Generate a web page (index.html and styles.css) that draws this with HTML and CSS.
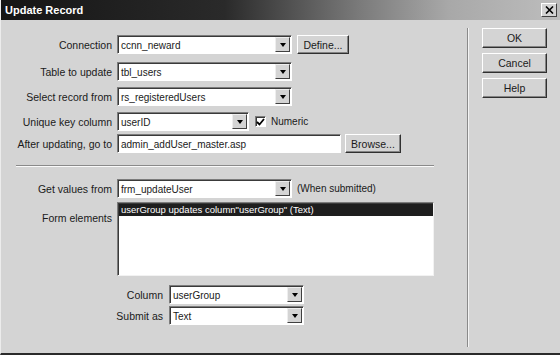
FILE: index.html
```html
<!DOCTYPE html>
<html lang="en">
<head>
  <meta charset="UTF-8">
  <title>Update Record</title>
  <link rel="stylesheet" href="styles.css">
</head>
<body>
  <div class="dialog">
    <div class="titlebar">
      <span class="title">Update Record</span>
      <span class="close">
        <svg width="9" height="8" viewBox="0 0 9 8"><path d="M1 0.5 L8 7.5 M8 0.5 L1 7.5" stroke="#000" stroke-width="1.6"/></svg>
      </span>
    </div>
    <div class="content">
      <div class="form">
        <div class="row">
          <label>Connection</label>
          <div class="select w175"><span>ccnn_neward</span><i class="arrow"></i></div>
          <button class="btn define">Define...</button>
        </div>
        <div class="row">
          <label>Table to update</label>
          <div class="select w175"><span>tbl_users</span><i class="arrow"></i></div>
        </div>
        <div class="row">
          <label>Select record from</label>
          <div class="select w175"><span>rs_registeredUsers</span><i class="arrow"></i></div>
        </div>
        <div class="row">
          <label>Unique key column</label>
          <div class="select w132"><span>userID</span><i class="arrow"></i></div>
          <span class="check">
            <svg width="9" height="8" viewBox="0 0 9 8"><path d="M1 4 L3.5 6.5 L8 1" fill="none" stroke="#000" stroke-width="1.8"/></svg>
          </span>
          <span class="text">Numeric</span>
        </div>
        <div class="row tight">
          <label>After updating, go to</label>
          <div class="input w224">admin_addUser_master.asp</div>
          <button class="btn browse">Browse...</button>
        </div>

        <div class="separator"></div>

        <div class="row">
          <label>Get values from</label>
          <div class="select w175"><span>frm_updateUser</span><i class="arrow"></i></div>
          <span class="text">(When submitted)</span>
        </div>
        <div class="row list-row">
          <label>Form elements</label>
          <div class="listbox">
            <div class="item selected">userGroup updates column"userGroup" (Text)</div>
          </div>
        </div>
        <div class="row sub first">
          <label>Column</label>
          <div class="select w135"><span>userGroup</span><i class="arrow"></i></div>
        </div>
        <div class="row sub">
          <label>Submit as</label>
          <div class="select w135"><span>Text</span><i class="arrow"></i></div>
        </div>
      </div>

      <div class="divider"></div>

      <div class="buttons">
        <button class="btn side default">OK</button>
        <button class="btn side">Cancel</button>
        <button class="btn side">Help</button>
      </div>
    </div>
  </div>
</body>
</html>
```

FILE: styles.css
```css
body {
  margin: 0;
  font-family: "Liberation Sans", Arial, sans-serif;
  font-size: 10px;
  color: #1a1a1a;
  background: #d4d4d4;
}
.dialog {
  width: 560px;
  height: 355px;
  box-sizing: border-box;
  background: #d4d4d4;
  border-left: 1px solid #ececec;
  border-bottom: 2px solid #2a2a2a;
  display: flex;
  flex-direction: column;
}
.titlebar {
  height: 20px;
  flex: none;
  display: flex;
  align-items: center;
  padding: 0 3px 0 4px;
  background: linear-gradient(to right, #151515 0%, #2a2a2a 40%, #7a7a7a 64%, #a8a8a8 80%, #bdbdbd 100%);
}
.title {
  color: #fff;
  font-weight: bold;
  font-size: 11px;
}
.close {
  margin-left: auto;
  width: 16px;
  height: 14px;
  box-sizing: border-box;
  background: #d4d4d4;
  border: 1px solid;
  border-color: #fff #404040 #404040 #fff;
  display: flex;
  align-items: center;
  justify-content: center;
}
.content {
  flex: 1;
  display: flex;
}
.form {
  width: 466px;
  padding-top: 15px;
  display: flex;
  flex-direction: column;
  gap: 6px;
}
.row {
  display: flex;
  align-items: center;
  height: 19px;
}
.row:nth-child(2) {
  margin-top: 2px;
}
.row.tight {
  margin-top: -3px;
}
.row label {
  width: 111px;
  margin-right: 5px;
  text-align: right;
  flex: none;
  font-size: 10.5px;
}
.select, .input {
  height: 19px;
  box-sizing: border-box;
  background: #fff;
  border: 1px solid;
  border-color: #7c7c7c #fff #fff #7c7c7c;
  box-shadow: inset 1px 1px 0 #3a3a3a;
  display: flex;
  align-items: center;
  padding-left: 3px;
}
.input {
  padding-top: 1px;
}
.select span {
  flex: 1;
  padding-top: 1px;
}
.arrow {
  width: 15px;
  height: 15px;
  box-sizing: border-box;
  margin-right: 1px;
  background: #d4d4d4;
  border: 1px solid;
  border-color: #eee #404040 #404040 #eee;
  display: flex;
  align-items: center;
  justify-content: center;
}
.arrow::after {
  content: "";
  border-left: 3.5px solid transparent;
  border-right: 3.5px solid transparent;
  border-top: 4px solid #000;
}
.w175 { width: 175px; }
.w132 { width: 132px; }
.w135 { width: 135px; }
.w224 { width: 224px; }
.btn {
  font-family: inherit;
  font-size: 10.5px;
  color: #1a1a1a;
  background: #d4d4d4;
  border: 1px solid;
  border-color: #fff #303030 #303030 #fff;
  box-shadow: inset -1px -1px 0 #848484;
  padding: 0;
  height: 19px;
}
.define {
  width: 52px;
  margin-left: 5px;
}
.browse {
  width: 56px;
  margin-left: 4px;
}
.check {
  width: 11px;
  height: 11px;
  box-sizing: border-box;
  margin-left: 6px;
  background: #fff;
  border: 1px solid;
  border-color: #7c7c7c #fff #fff #7c7c7c;
  box-shadow: inset 1px 1px 0 #3a3a3a;
  display: flex;
  align-items: center;
  justify-content: center;
}
.text {
  margin-left: 5px;
}
.separator {
  margin: 6px 0 6px 15px;
  width: 418px;
  height: 0;
  border-top: 1px solid #8a8a8a;
  border-bottom: 1px solid #fafafa;
}
.list-row {
  height: 74px;
  align-items: flex-start;
  margin-top: -2px;
}
.list-row label {
  padding-top: 10px;
}
.listbox {
  width: 317px;
  height: 74px;
  box-sizing: border-box;
  background: #fff;
  border: 1px solid;
  border-color: #7c7c7c #f2f2f2 #f2f2f2 #7c7c7c;
  box-shadow: inset 1px 1px 0 #3a3a3a;
  padding: 1px 0 0 1px;
}
.item {
  height: 12px;
  line-height: 12px;
  padding-left: 2px;
  font-size: 9.5px;
}
.item.selected {
  background: #1e1e1e;
  color: #fff;
}
.sub label {
  width: 162px;
  margin-right: 6px;
}
.sub {
  margin-top: -4px;
}
.sub.first {
  margin-top: 3px;
}
.divider {
  width: 0;
  margin: 8px 0 6px;
  border-left: 1px solid #8a8a8a;
  border-right: 1px solid #f4f4f4;
}
.buttons {
  padding: 8px 0 0 13px;
  display: flex;
  flex-direction: column;
  gap: 5px;
}
.side {
  width: 65px;
  height: 20px;
}
```
